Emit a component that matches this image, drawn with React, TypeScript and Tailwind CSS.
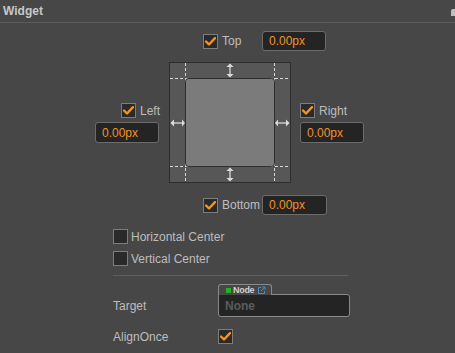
import React from 'react';

const font = { fontFamily: '"Liberation Sans", Arial, sans-serif' };

const Check = ({ checked = true }: { checked?: boolean }) => (
  <div className="w-[15px] h-[15px] border border-[#7d7d7d] bg-[#2a2a2a] flex items-center justify-center shrink-0">
    {checked && (
      <svg width="11" height="9" viewBox="0 0 11 9" className="block">
        <path d="M1 4.5 L4 7.5 L10 1.2" stroke="#f7931e" strokeWidth="2.4" fill="none" strokeLinecap="round" strokeLinejoin="round" />
      </svg>
    )}
  </div>
);

const PxInput = ({ w = 'w-[64px]', h = 'h-[20px]' }: { w?: string; h?: string }) => (
  <div className={`${w} ${h} bg-[#242424] border border-[#6c6c6c] rounded-[3px] flex items-center pl-[6px] text-[12px] text-[#f0922a]`}>
    0.00px
  </div>
);

const Diagram = () => (
  <svg width="122" height="121" viewBox="0 0 122 121" className="block shrink-0">
    <rect x="0.5" y="0.5" width="121" height="120" fill="#575757" stroke="#2e2e2e" />
    <g stroke="#d8d8d8" strokeDasharray="3 2" strokeWidth="1">
      <line x1="1" y1="16.5" x2="121" y2="16.5" />
      <line x1="1" y1="104.5" x2="121" y2="104.5" />
      <line x1="16.5" y1="1" x2="16.5" y2="120" />
      <line x1="105.5" y1="1" x2="105.5" y2="120" />
    </g>
    <rect x="16.5" y="16.5" width="89" height="88" rx="3" fill="#7b7b7b" stroke="#2e2e2e" />
    <g stroke="#dcdcdc" fill="#dcdcdc" strokeWidth="1.3">
      {/* top arrow */}
      <line x1="61" y1="3" x2="61" y2="14" />
      <path d="M57.5 5 L61 1.5 L64.5 5 Z" stroke="none" />
      <path d="M57.5 12 L61 15.5 L64.5 12 Z" stroke="none" />
      {/* bottom arrow */}
      <line x1="61" y1="107" x2="61" y2="118" />
      <path d="M57.5 109 L61 105.5 L64.5 109 Z" stroke="none" />
      <path d="M57.5 116 L61 119.5 L64.5 116 Z" stroke="none" />
      {/* left arrow */}
      <line x1="4" y1="61" x2="14" y2="61" />
      <path d="M5 57.5 L1.5 61 L5 64.5 Z" stroke="none" />
      <path d="M13 57.5 L16 61 L13 64.5 Z" stroke="none" />
      {/* right arrow */}
      <line x1="108" y1="61" x2="118" y2="61" />
      <path d="M109 57.5 L106 61 L109 64.5 Z" stroke="none" />
      <path d="M117 57.5 L120.5 61 L117 64.5 Z" stroke="none" />
    </g>
  </svg>
);

export default function App() {
  return (
    <div className="w-[455px] h-[353px] bg-[#474747] text-[#bdbdbd] text-[12px] overflow-hidden" style={font}>
      {/* header */}
      <div className="h-[23px] border-b border-[#5c5c5c] flex items-center justify-between pl-[3px]">
        <span className="font-bold text-[#c8c8c8] text-[12px]">Widget</span>
        <div className="w-[4px] h-[7px] bg-[#bdbdbd] mt-[3px] rounded-tl-[2px]"></div>
      </div>

      {/* top */}
      <div className="mt-[8px] flex items-center h-[20px] pl-[203px]">
        <Check />
        <span className="ml-[4px] w-[40px]">Top</span>
        <PxInput />
      </div>

      {/* middle */}
      <div className="mt-[11px] flex">
        <div className="w-[159px] flex flex-col items-end pt-[41px]">
          <div className="flex items-center h-[15px] mr-[-1px]">
            <Check />
            <span className="ml-[4px]">Left</span>
          </div>
          <div className="mt-[4px]">
            <PxInput h="h-[21px]" />
          </div>
        </div>
        <div className="ml-[10px]">
          <Diagram />
        </div>
        <div className="ml-[9px] flex flex-col pt-[41px]">
          <div className="flex items-center h-[15px]">
            <Check />
            <span className="ml-[4px]">Right</span>
          </div>
          <div className="mt-[4px]">
            <PxInput h="h-[21px]" />
          </div>
        </div>
      </div>

      {/* bottom */}
      <div className="mt-[12px] flex items-center h-[20px] pl-[203px]">
        <Check />
        <span className="ml-[4px] w-[40px]">Bottom</span>
        <PxInput w="w-[65px]" />
      </div>

      {/* centers */}
      <div className="pl-[113px] mt-[14px] flex flex-col gap-[7px]">
        <div className="flex items-center h-[15px]">
          <Check checked={false} />
          <span className="ml-[3px]">Horizontal Center</span>
        </div>
        <div className="flex items-center h-[15px]">
          <Check checked={false} />
          <span className="ml-[3px]">Vertical Center</span>
        </div>
      </div>

      <div className="ml-[113px] w-[235px] mt-[9px] border-t border-[#5e5e5e]"></div>

      {/* target */}
      <div className="mt-[8px] flex pl-[113px]">
        <span className="w-[105px] pt-[13px]">Target</span>
        <div className="flex flex-col">
          <div className="w-[54px] h-[11px] border border-b-0 border-[#8a8a8a] rounded-t-[3px] flex items-center pl-[7px] gap-[2px] relative z-10 bg-[#474747]">
            <div className="w-[5px] h-[5px] bg-[#22b322]"></div>
            <span className="font-bold text-[9px] text-[#d0d0d0] leading-none tracking-[-0.3px]">Node</span>
            <svg width="9" height="9" viewBox="0 0 9 9" className="block ml-[1px]">
              <path d="M4 1.5 H1.5 V7.5 H7.5 V5" stroke="#3c8fd6" fill="none" strokeWidth="1" />
              <path d="M5 1 H8 V4 M8 1 L4 5" stroke="#3c8fd6" fill="none" strokeWidth="1" />
            </svg>
          </div>
          <div className="w-[132px] h-[23px] -mt-[1px] border border-[#8a8a8a] rounded-b-[3px] rounded-tr-[3px] bg-[#242424] flex items-center pl-[6px] text-[#5c5c5c] font-bold text-[12px]">
            None
          </div>
        </div>
      </div>

      {/* align once */}
      <div className="mt-[12px] flex items-center h-[15px] pl-[113px]">
        <span className="w-[105px]">AlignOnce</span>
        <Check />
      </div>
    </div>
  );
}
